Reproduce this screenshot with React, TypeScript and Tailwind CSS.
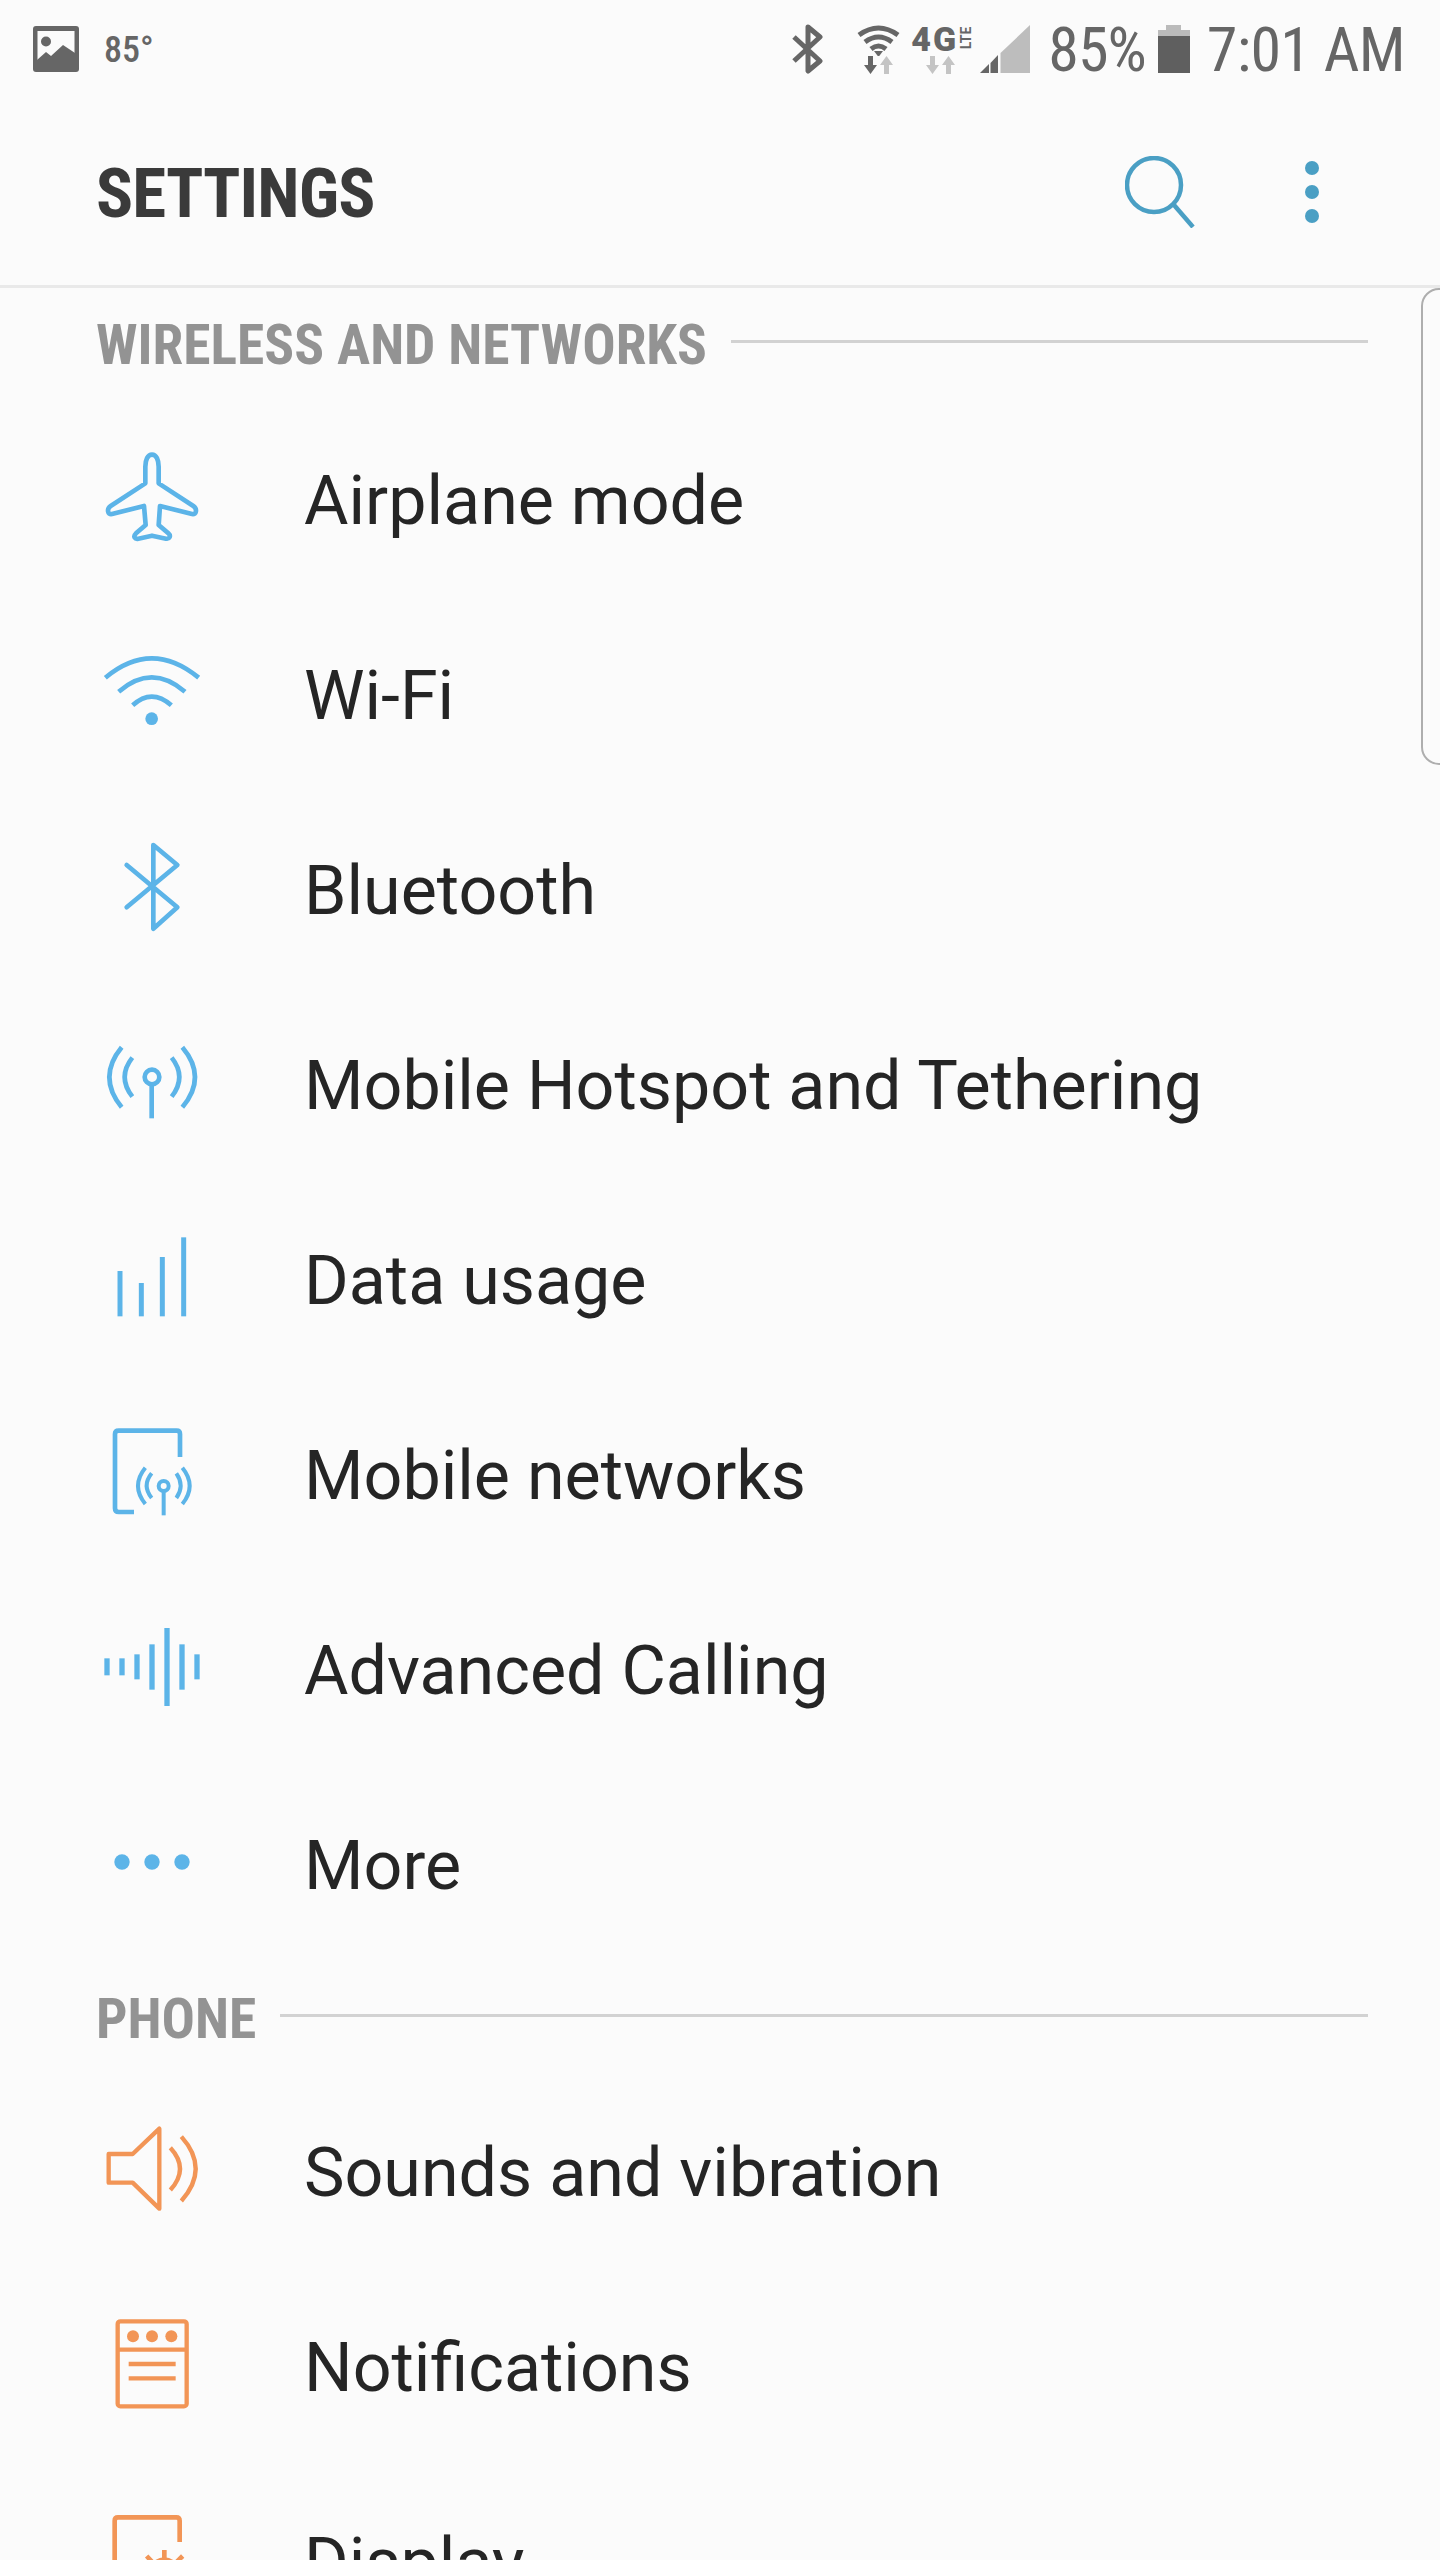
import type { ReactNode } from "react";

const BLUE = "#5cb4e8";
const ORANGE = "#f29556";
const DARK = "#666666";
const LIGHT = "#c4c4c4";
const TEAL = "#4a9fc4";

// icons are drawn in a 480 unit box, 3 units to the pixel
function RowIcon({ y, color = BLUE, children }: { y: number; color?: string; children: ReactNode }) {
  return (
    <svg
      width="160"
      height="160"
      viewBox={`0 ${y} 480 480`}
      fill="none"
      stroke={color}
      strokeWidth="14"
      strokeLinejoin="round"
    >
      {children}
    </svg>
  );
}

function Row({ icon, label }: { icon: ReactNode; label: string }) {
  return (
    <div className="flex items-center h-[195px]">
      <div className="w-[224px] ml-[80px] shrink-0">{icon}</div>
      <span className="text-[68.2px] leading-none mt-[3px] text-[#252525] whitespace-nowrap">{label}</span>
    </div>
  );
}

function Section({ title, last }: { title: string; last?: boolean }) {
  return (
    <div className={`flex items-center h-[106px] pl-[96px] pr-[72px] ${last ? "mb-[6px]" : "mb-[8px]"}`}>
      <span className="text-[55.5px] leading-none mt-[9px] font-bold text-[#939393] font-stretch-condensed whitespace-nowrap">
        {title}
      </span>
      <div className="flex-1 h-[3px] bg-[#d2d2d2] ml-[24px]" />
    </div>
  );
}

function ArrowPair({ down, up }: { down: string; up: string }) {
  return (
    <svg width="30" height="18" viewBox="0 0 30 18">
      <path d="M0 9 H4 V0 H9 V9 H13 L6.5 18 Z" fill={down} />
      <path d="M16 9 H20 V18 H25 V9 H29 L22.5 0 Z" fill={up} />
    </svg>
  );
}

function StatusBar() {
  return (
    <div className="flex h-[96px] pt-[24px] pl-[33px] pr-[35px] text-[#666666]">
      <svg width="46" height="46" viewBox="0 0 46 46" className="mt-[2px]">
        <rect width="46" height="46" rx="3" fill={DARK} />
        <rect x="4.5" y="5" width="37" height="37" fill="#fbfbfb" />
        <circle cx="13" cy="15.5" r="5" fill={DARK} />
        <path d="M4 34 L13 26 L18 30 L30 19 L42 27 V42 H4 Z" fill={DARK} />
      </svg>
      <span className="ml-[25px] mt-[8px] text-[36px] leading-[36px] font-medium font-stretch-condensed">85°</span>

      <div className="flex-1" />

      <svg width="32" height="50" viewBox="0 0 32 50" fill="none" stroke={DARK} strokeWidth="5" strokeLinejoin="round">
        <path d="M2 13 L28 37 L16 47 V3 L28 13 L2 37" />
      </svg>

      <div className="ml-[33px] w-[43px] flex flex-col items-center">
        <svg width="43" height="32" viewBox="0 0 43 32" fill="none" stroke={DARK} strokeWidth="5">
          <path d="M2 11 Q21.5 -3 41 11" />
          <path d="M8 18 Q21.5 8 35 18" />
          <path d="M14 25 Q21.5 19 29 25" />
          <path d="M17 27 H26 L21.5 33 Z" fill={DARK} stroke="none" />
        </svg>
        <ArrowPair down={DARK} up={LIGHT} />
      </div>

      <div className="ml-[11px] w-[61px] flex flex-col">
        <div className="flex h-[33px]">
          <span className="text-[34px] leading-[30px] font-black tracking-[2px] w-[49px]">4G</span>
          <span className="h-[24px] w-[12px] flex items-center justify-center text-[14px] leading-none font-bold mt-[2px] -rotate-90">
            LTE
          </span>
        </div>
        <div className="ml-[15px] -mt-[1px]">
          <ArrowPair down={LIGHT} up={LIGHT} />
        </div>
      </div>

      <svg width="50" height="48" viewBox="0 0 50 48" className="ml-[8px] mt-[1px]">
        <path d="M0 48 L9 39 V48 Z" fill={DARK} />
        <path d="M10.5 38 L18 30 V48 H10.5 Z" fill={DARK} />
        <path d="M20.5 28 L50 0 V48 H20.5 Z" fill="#bdbdbd" />
      </svg>

      <span className="ml-[18px] text-[62px] leading-[52px] tracking-[-1px] font-stretch-condensed">85%</span>

      <svg width="32" height="48" viewBox="0 0 32 48" className="ml-[12px] mt-[1px]">
        <path d="M8 0 H23 V5 H32 V11 H0 V5 H8 Z" fill="#bbbbbb" />
        <rect y="11" width="32" height="37" fill="#5f5f5f" />
      </svg>

      <span className="ml-[17px] text-[62px] leading-[52px] tracking-[-0.7px] font-stretch-condensed whitespace-nowrap">
        7:01 AM
      </span>
    </div>
  );
}

function Header() {
  return (
    <div className="flex items-center h-[192px] border-b-[3px] border-[#e9e9e9] pl-[96px] pr-[121px]">
      <span className="flex-1 text-[69px] leading-none font-bold tracking-[-0.9px] text-[#3a3a3a] font-stretch-condensed mt-[6px]">
        SETTINGS
      </span>
      <svg width="70" height="72" viewBox="0 0 70 72" fill="none" stroke={TEAL} strokeWidth="4.5" className="mt-[2px]">
        <circle cx="29" cy="29" r="27" />
        <path d="M49 49 L68 71" />
      </svg>
      <div className="ml-[110px] mt-[3px] flex flex-col gap-[10px]">
        <div className="w-[14px] h-[14px] rounded-full bg-[#4a9fc4]" />
        <div className="w-[14px] h-[14px] rounded-full bg-[#4a9fc4]" />
        <div className="w-[14px] h-[14px] rounded-full bg-[#4a9fc4]" />
      </div>
    </div>
  );
}

export default function App() {
  return (
    <div className="w-[1440px] h-[2560px] overflow-hidden bg-[#fbfbfb] relative font-['Roboto',sans-serif]">
      <StatusBar />
      <Header />

      {/* edge panel handle */}
      <div className="absolute left-[1421px] top-[288px] w-[40px] h-[477px] rounded-l-[18px] border-2 border-[#aeaeae]" />

      <Section title="WIRELESS AND NETWORKS" />
      <Row
        label="Airplane mode"
        icon={
          <RowIcon y={-30}>
            <path d="M216 74 C203 74 196 90 196 110 V160 L92 228 C80 236 82 255 96 252 L192 228 L197 285 L168 310 C158 320 165 328 175 326 L216 317 L258 326 C268 328 274 318 265 310 L236 285 L240 228 L336 252 C350 255 352 236 340 228 L236 160 V110 C236 90 229 74 216 74 Z" />
          </RowIcon>
        }
      />
      <Row
        label="Wi-Fi"
        icon={
          <RowIcon y={555}>
            <path d="M76 743 Q215 627 356 743" />
            <path d="M116 785 Q215 699 315 785" />
            <path d="M158 826 Q215 774 274 826" />
            <circle cx="215" cy="866" r="19" fill={BLUE} stroke="none" />
          </RowIcon>
        }
      />
      <Row
        label="Bluetooth"
        icon={
          <RowIcon y={-30}>
            <path d="M140 135 L292 262 L220 326 V75 L292 135 L140 262" strokeLinecap="round" />
          </RowIcon>
        }
      />
      <Row
        label="Mobile Hotspot and Tethering"
        icon={
          <RowIcon y={-45}>
            <circle cx="216" cy="171" r="22" />
            <path d="M215 195 V295" />
            <path d="M125 82 Q51 172 125 262" />
            <path d="M307 82 Q383 172 307 262" />
            <path d="M157 113 Q111 171 157 230" />
            <path d="M275 113 Q321 171 275 230" />
          </RowIcon>
        }
      />
      <Row
        label="Data usage"
        icon={
          <RowIcon y={540}>
            <g strokeWidth="15">
              <path d="M120 753 V889" />
              <path d="M184 789 V889" />
              <path d="M247 711 V889" />
              <path d="M311 652 V889" />
            </g>
          </RowIcon>
        }
      />
      <Row
        label="Mobile networks"
        icon={
          <RowIcon y={-45}>
            <path d="M162 306 H116 Q105 306 105 295 V72 Q105 62 116 62 H290 Q300 62 300 72 V141" />
            <g strokeWidth="12">
              <circle cx="251" cy="228" r="15" />
              <path d="M251 243 V316" />
              <path d="M196 173 Q152 227 196 282" />
              <path d="M307 173 Q351 227 307 282" />
              <path d="M215 190 Q185 227 215 264" />
              <path d="M289 190 Q315 227 289 264" />
            </g>
          </RowIcon>
        }
      />
      <Row
        label="Advanced Calling"
        icon={
          <RowIcon y={-150}>
            <g strokeWidth="16">
              <path d="M81 55 V106" />
              <path d="M126 55 V106" />
              <path d="M171 43 V118" />
              <path d="M216 13 V149" />
              <path d="M261 -36 V198" />
              <path d="M306 13 V149" />
              <path d="M351 43 V118" />
            </g>
          </RowIcon>
        }
      />
      <Row
        label="More"
        icon={
          <RowIcon y={435}>
            <g fill={BLUE} stroke="none">
              <circle cx="126" cy="666" r="23" />
              <circle cx="216" cy="666" r="23" />
              <circle cx="306" cy="666" r="23" />
            </g>
          </RowIcon>
        }
      />

      <Section title="PHONE" last />
      <Row
        label="Sounds and vibration"
        icon={
          <RowIcon y={-24} color={ORANGE}>
            <g strokeWidth="13">
              <path d="M86 162 H158 L238 86 V326 L158 248 H86 Z" />
              <path d="M271 143 Q329 206 271 270" />
              <path d="M304 110 Q390 206 304 303" />
            </g>
          </RowIcon>
        }
      />
      <Row
        label="Notifications"
        icon={
          <RowIcon y={561} color={ORANGE}>
            <g strokeWidth="13">
              <rect x="113" y="664" width="207" height="255" rx="8" />
              <path d="M113 749 H320" />
              <path d="M146 792 H287" />
              <path d="M146 835 H287" />
            </g>
            <g fill={ORANGE} stroke="none">
              <circle cx="159" cy="709" r="18" />
              <circle cx="216" cy="709" r="18" />
              <circle cx="274" cy="709" r="18" />
            </g>
          </RowIcon>
        }
      />
      <Row
        label="Display"
        icon={
          <RowIcon y={1146} color={ORANGE}>
            <path d="M104 1500 V1262 Q104 1252 114 1252 H289 Q299 1252 299 1262 V1326" />
            <circle cx="253" cy="1420" r="48" fill={ORANGE} stroke="none" />
            <path d="M253 1350 V1385 M200 1368 L222 1392 M308 1368 L284 1392" />
          </RowIcon>
        }
      />
    </div>
  );
}
